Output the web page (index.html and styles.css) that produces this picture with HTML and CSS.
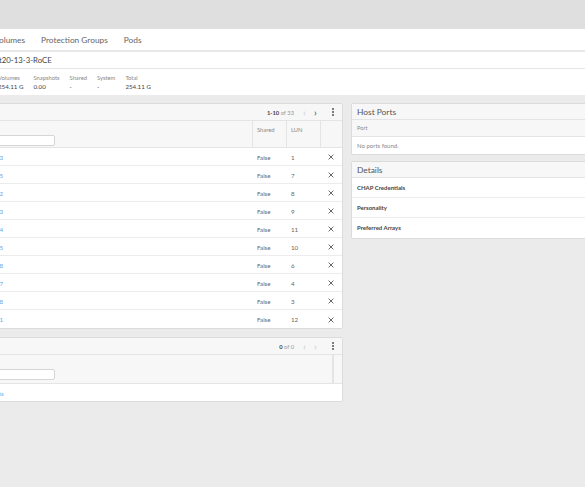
FILE: index.html
```html
<!DOCTYPE html>
<html lang="en">
<head>
  <meta charset="UTF-8" />
  <title>Host t20-13-3-RoCE</title>
  <link rel="stylesheet" href="styles.css">
</head>
<body>

  <div class="topbar"></div>

  <nav class="tabs">
    <a href="#">Volumes</a>
    <a href="#">Protection Groups</a>
    <a href="#">Pods</a>
  </nav>

  <div class="titlebar">t20-13-3-RoCE</div>

  <div class="stats">
    <div class="stat"><span class="label">Volumes</span><span class="value">254.11 G</span></div>
    <div class="stat"><span class="label">Snapshots</span><span class="value">0.00</span></div>
    <div class="stat"><span class="label">Shared</span><span class="value">-</span></div>
    <div class="stat"><span class="label">System</span><span class="value">-</span></div>
    <div class="stat"><span class="label">Total</span><span class="value">254.11 G</span></div>
  </div>

  <div class="content">
    <div class="col-left">

      <div class="panel">
        <div class="panel-head">
          <span class="pager"><b>1-10</b> of 33</span>
          <span class="arrow off">&#8249;</span>
          <span class="arrow">&#8250;</span>
          <span class="kebab"><i></i><i></i><i></i></span>
        </div>
        <div class="col-head">
          <div class="c-name"><input type="text" class="filter" /></div>
          <div class="c-shared">Shared</div>
          <div class="c-lun">LUN</div>
          <div class="c-act"></div>
        </div>
        <div id="volumes"></div>
      </div>

      <div class="panel">
        <div class="panel-head">
          <span class="pager"><b>0</b> of 0</span>
          <span class="arrow off">&#8249;</span>
          <span class="arrow off">&#8250;</span>
          <span class="kebab"><i></i><i></i><i></i></span>
        </div>
        <div class="col-head tall">
          <div class="c-name"><input type="text" class="filter" /></div>
          <div class="c-last"></div>
        </div>
        <div class="row short"><div class="c-name"><a href="#">rdma-snap-0a</a></div></div>
      </div>

    </div>

    <div class="col-right">
      <div class="panel">
        <div class="box-head">Host Ports</div>
        <div class="box-sub">Port</div>
        <div class="box-row muted">No ports found.</div>
      </div>

      <div class="panel">
        <div class="box-head">Details</div>
        <div class="detail">CHAP Credentials</div>
        <div class="detail">Personality</div>
        <div class="detail">Preferred Arrays</div>
      </div>
    </div>
  </div>

<script>
  const volumes = [
    ['rdma-vol-003', 1], ['rdma-vol-015', 7], ['rdma-vol-032', 8],
    ['rdma-vol-013', 9], ['rdma-vol-014', 11], ['rdma-vol-005', 10],
    ['rdma-vol-008', 6], ['rdma-vol-017', 4], ['rdma-vol-058', 3],
    ['rdma-vol-001', 12]
  ];
  const lista = document.getElementById('volumes');
  volumes.forEach(v => {
    lista.innerHTML += `
      <div class="row">
        <div class="c-name"><a href="#">${v[0]}</a></div>
        <div class="c-shared">False</div>
        <div class="c-lun">${v[1]}</div>
        <div class="c-act">
          <svg width="6" height="6" viewBox="0 0 6 6"><path d="M0.6 0.6L5.4 5.4M5.4 0.6L0.6 5.4" stroke="#555" stroke-width="0.9" fill="none"/></svg>
        </div>
      </div>
    `;
  });
</script>

</body>
</html>
```

FILE: styles.css
```css
* {
  box-sizing: border-box;
}
body {
  margin: 0;
  font-family: Lato, 'Open Sans', sans-serif;
  background: #ebebeb;
  color: #555;
  overflow: hidden;
  width: 585px;
  height: 487px;
}

.topbar {
  height: 29px;
  background: #dfdfdf;
}

.tabs {
  height: 21px;
  background: white;
  display: flex;
  align-items: center;
  gap: 16px;
  margin-left: -6px;
  padding-top: 1px;
}
.tabs a {
  font-size: 8.3px;
  color: #666;
  text-decoration: none;
}

.titlebar {
  background: white;
  border-top: 2px solid #e8e8e8;
  border-bottom: 1px solid #e6e6e6;
  height: 19px;
  line-height: 16px;
  font-size: 7.8px;
  color: #444;
  text-indent: -1px;
}

.stats {
  background: white;
  height: 26px;
  display: flex;
  gap: 10px;
  margin-left: -2px;
  padding-top: 4px;
}
.stat {
  display: flex;
  flex-direction: column;
}
.stat .label {
  font-size: 5.8px;
  color: #888;
  line-height: 9px;
}
.stat .value {
  font-size: 6.2px;
  color: #444;
  line-height: 10px;
}

.content {
  display: flex;
  gap: 8px;
  padding-top: 8px;
  margin-left: -110px;
}
.col-left {
  width: 453px;
  flex-shrink: 0;
  display: flex;
  flex-direction: column;
  gap: 8px;
}
.col-right {
  width: 300px;
  flex-shrink: 0;
  display: flex;
  flex-direction: column;
  gap: 6px;
}

.panel {
  background: white;
  border: 1px solid #dcdcdc;
  border-radius: 2px;
}

.panel-head {
  height: 17px;
  background: #f7f7f7;
  border-bottom: 1px solid #e4e4e4;
  display: flex;
  align-items: center;
  justify-content: flex-end;
  padding-right: 8px;
  font-size: 5.8px;
  color: #999;
}
.pager b {
  color: #444;
  font-weight: 700;
}
.arrow {
  font-size: 10px;
  color: #444;
  width: 11px;
  text-align: center;
  margin-top: -1px;
}
.arrow.off {
  color: #c8c8c8;
}
.pager + .arrow {
  margin-left: 5px;
}
.kebab {
  display: flex;
  flex-direction: column;
  gap: 1px;
  margin-left: 11px;
}
.kebab i {
  width: 2px;
  height: 2px;
  background: #555;
  border-radius: 50%;
}

.col-head {
  display: flex;
  height: 27px;
  background: #f7f7f7;
  border-bottom: 1px solid #e4e4e4;
  font-size: 5.8px;
  color: #888;
}
.col-head.tall {
  height: 29px;
}
.col-head > div {
  padding: 5px 4px;
  border-right: 1px solid #e4e4e4;
}
.col-head > div:last-child {
  border-right: none;
}
.col-head .c-name {
  padding: 14px 0 0 56px;
}
.col-head.tall .c-last {
  width: 9px;
  margin-left: auto;
  border-left: 1px solid #e4e4e4;
  flex: none;
}
.filter {
  width: 108px;
  height: 11px;
  border: 1px solid #d6d6d6;
  border-radius: 2px;
  background: white;
  display: block;
}

.c-name {
  flex: 1;
  min-width: 0;
  white-space: nowrap;
}
.c-shared {
  width: 34px;
  flex: none;
}
.c-lun {
  width: 34px;
  flex: none;
}
.c-act {
  width: 21px;
  flex: none;
}

.row {
  display: flex;
  align-items: center;
  height: 18px;
  padding-top: 1px;
  border-bottom: 1px solid #ececec;
  font-size: 6.2px;
  color: #666;
}
.row.short {
  height: 17px;
}
.row:last-child {
  border-bottom: none;
}
.row > div {
  padding-left: 4px;
}
.row .c-name {
  padding-left: 75px;
}
.row a {
  color: #62a8ea;
  text-decoration: none;
}
.row .c-act {
  display: flex;
  align-items: center;
  padding-left: 7px;
}

.box-head {
  height: 16px;
  line-height: 17px;
  background: #f7f7f7;
  border-bottom: 1px solid #e4e4e4;
  font-size: 8.4px;
  color: #555;
  padding-left: 5px;
}
.box-sub {
  height: 17px;
  line-height: 16px;
  background: #f7f7f7;
  border-bottom: 1px solid #e4e4e4;
  font-size: 5.6px;
  color: #888;
  padding-left: 5px;
}
.box-row {
  height: 17px;
  line-height: 17px;
  font-size: 6px;
  padding-left: 5px;
}
.muted {
  color: #888;
}
.detail {
  height: 20px;
  line-height: 19px;
  font-size: 6px;
  font-weight: 700;
  color: #444;
  padding-left: 5px;
  border-bottom: 1px solid #ececec;
}
.detail:last-child {
  border-bottom: none;
}
```
